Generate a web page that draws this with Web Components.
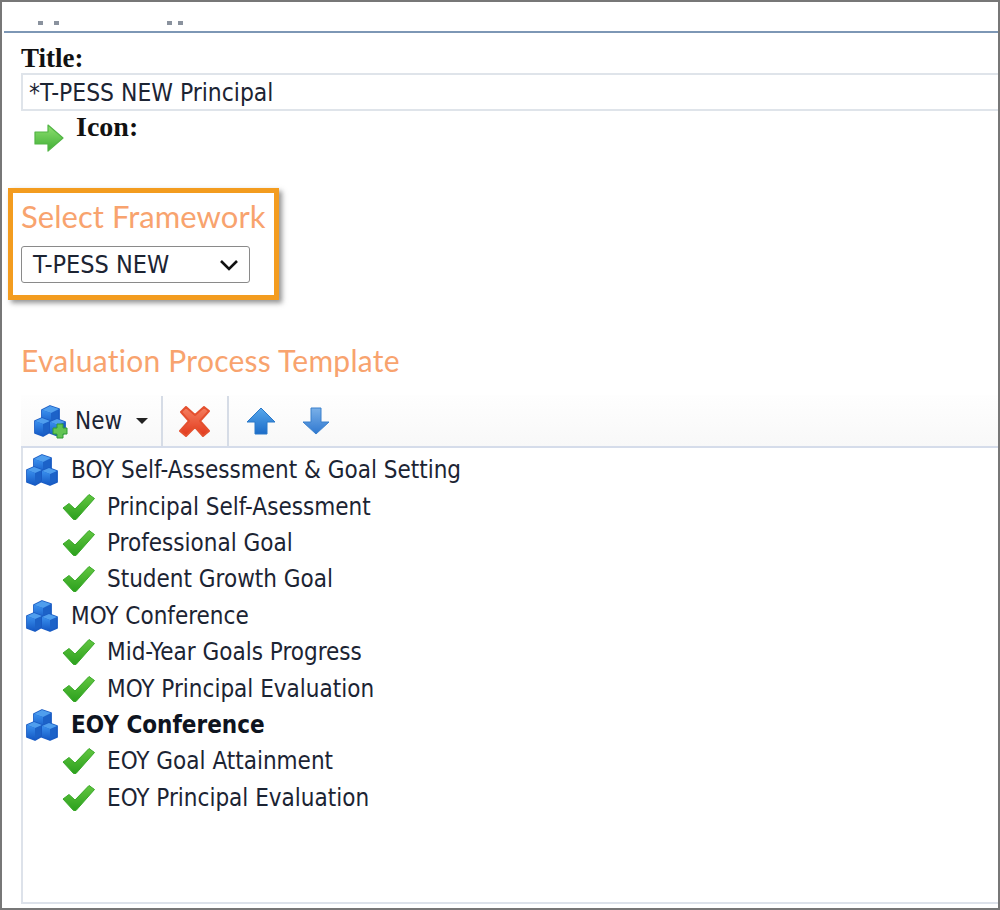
<!DOCTYPE html>
<html>
<head>
<meta charset="utf-8">
<title>Evaluation Process Template</title>
<style>
html, body { margin: 0; padding: 0; background: #fff; }
body { font-family: "DejaVu Sans", sans-serif; overflow: hidden; }
</style>
</head>
<body>
<app-frame>
  <title-field label="Title:" value="*T-PESS NEW Principal"></title-field>
  <icon-field label="Icon:"></icon-field>
  <framework-box heading="Select Framework" value="T-PESS NEW"></framework-box>
  <section-heading>Evaluation Process Template</section-heading>
  <process-toolbar></process-toolbar>
  <process-tree>
    <tree-row kind="group">BOY Self-Assessment &amp; Goal Setting</tree-row>
    <tree-row>Principal Self-Asessment</tree-row>
    <tree-row>Professional Goal</tree-row>
    <tree-row>Student Growth Goal</tree-row>
    <tree-row kind="group">MOY Conference</tree-row>
    <tree-row>Mid-Year Goals Progress</tree-row>
    <tree-row>MOY Principal Evaluation</tree-row>
    <tree-row kind="group" selected>EOY Conference</tree-row>
    <tree-row>EOY Goal Attainment</tree-row>
    <tree-row>EOY Principal Evaluation</tree-row>
  </process-tree>
</app-frame>

<script>
// shared icons - gradients have to live in the same shadow root as the svg
const UI_FONT = `"DejaVu Sans Condensed", "DejaVu Sans", sans-serif`;

const CUBES = `
<svg viewBox="0 0 32 32" width="32" height="32" style="filter:blur(.6px)">
  <defs>
    <linearGradient id="cubeSide" x1="0" y1="0" x2="0" y2="1"><stop offset="0" stop-color="#3a90ee"/><stop offset="1" stop-color="#1458c4"/></linearGradient>
  </defs>
  <g stroke="#1a5cc4" stroke-width="1.800" stroke-linejoin="round">
    <path d="M8 5l8-4 9 3v12l-8 4-9-3z" fill="#1c62c8"/>
    <path d="M8 5l8-4 9 3-8 4z" fill="#4f9eee" stroke="none"/>
    <path d="M8 5l9 3v12l-9-3z" fill="url(#cubeSide)" stroke="none"/>
    <path d="M1 16l7-3 8 3v11l-7 4-8-3z" fill="#1c62c8"/>
    <path d="M1 16l7-3 8 3-7 3z" fill="#4f9eee" stroke="none"/>
    <path d="M1 16l8 3v12l-8-3z" fill="url(#cubeSide)" stroke="none"/>
    <path d="M16 17l7-3 8 3v11l-7 3-8-3z" fill="#1c62c8"/>
    <path d="M16 17l7-3 8 3-7 3z" fill="#4f9eee" stroke="none"/>
    <path d="M16 17l8 3v11l-8-3z" fill="url(#cubeSide)" stroke="none"/>
  </g>
</svg>`;
const CHECK = `
<svg viewBox="0 0 33 28" width="33" height="28" style="filter:blur(.5px)">
  <defs>
    <linearGradient id="chk" x1="0" y1="0" x2="0" y2="1"><stop offset="0" stop-color="#62c640"/><stop offset="1" stop-color="#2ca01e"/></linearGradient>
  </defs>
  <path d="M1 15l6-4.500 6 5.500L27 1.500l5.500 4L14 26.500h-2.500z" fill="url(#chk)" stroke="#38a828" stroke-width="1" stroke-linejoin="round"/>
</svg>`;

class AppFrame extends HTMLElement {
  constructor() {
    super();
    this.attachShadow({ mode: "open" }).innerHTML = `
    <style>
      :host { display: block; box-sizing: border-box; width: 1000px; height: 910px; border: 2px solid #777; overflow: hidden; background: #fff; color: #1c2433; }
      .top { height: 29px; margin-left: 2px; border-bottom: 2px solid #7d97b5; display: flex; align-items: flex-end; padding-left: 34px; }
      .dots { display: flex; gap: 11px; margin-bottom: 6px; }
      .dots + .dots { margin-left: 108px; gap: 6px; }
      .dots i { width: 5px; height: 4px; background: #8a929e; display: block; }
    </style>
    <div class="top">
      <div class="dots"><i></i><i></i></div>
      <div class="dots"><i></i><i></i></div>
    </div>
    <slot></slot>`;
  }
}
customElements.define("app-frame", AppFrame);

class TitleField extends HTMLElement {
  constructor() {
    super();
    this.attachShadow({ mode: "open" }).innerHTML = `
    <style>
      :host { display: block; padding: 10px 0 0 19px; }
      .lab { font: bold 27px/30px "Liberation Serif", serif; color: #111; height: 30px; }
      .inp { box-sizing: border-box; height: 38px; margin-right: -4px; border: 2px solid #dfe4ea; border-right: 0; padding-left: 6px; font: 24.400px/36px ${UI_FONT}; color: #1c2433; white-space: nowrap; }
    </style>
    <div class="lab"></div>
    <div class="inp"></div>`;
  }
  connectedCallback() {
    this.shadowRoot.querySelector(".lab").textContent = this.getAttribute("label");
    this.shadowRoot.querySelector(".inp").textContent = this.getAttribute("value");
  }
}
customElements.define("title-field", TitleField);

class IconField extends HTMLElement {
  constructor() {
    super();
    this.attachShadow({ mode: "open" }).innerHTML = `
    <style>
      :host { display: flex; padding: 2px 0 0 32px; height: 77px; box-sizing: border-box; }
      svg { margin-top: 11px; flex: none; filter: blur(.6px); }
      .lab { font: bold 28px/28px "Liberation Serif", serif; color: #111; margin-left: 12px; }
    </style>
    <svg viewBox="0 0 30 28" width="30" height="28">
      <defs><linearGradient id="arw" x1="0" y1="0" x2="0" y2="1"><stop offset="0" stop-color="#8fe070"/><stop offset="1" stop-color="#3fae35"/></linearGradient></defs>
      <path d="M1 8h13V1l15 13-15 13v-7H1z" fill="url(#arw)" stroke="#52b545" stroke-width="1.200" stroke-linejoin="round"/>
    </svg>
    <div class="lab"></div>`;
  }
  connectedCallback() {
    this.shadowRoot.querySelector(".lab").textContent = this.getAttribute("label");
  }
}
customElements.define("icon-field", IconField);

class FrameworkBox extends HTMLElement {
  constructor() {
    super();
    this.attachShadow({ mode: "open" }).innerHTML = `
    <style>
      :host { display: block; box-sizing: border-box; width: 271px; height: 112px; margin: 0 0 0 6px; border: 5px solid #f39c1f; box-shadow: 3px 3px 5px rgba(60,60,60,.55); padding: 3px 0 0 8px; }
      h2 { margin: 0; font: 400 31px/40px Lato, sans-serif; color: #f8a36e; white-space: nowrap; letter-spacing: .05px; }
      .sel { box-sizing: border-box; width: 229px; height: 37px; margin-top: 10px; border: 1px solid #8a8a8a; border-radius: 3px; display: flex; align-items: center; justify-content: space-between; padding: 0 10px 0 11px; font: 25px/34px ${UI_FONT}; color: #1c2433; }
      svg { flex: none; }
    </style>
    <h2></h2>
    <div class="sel"><span></span>
      <svg viewBox="0 0 20 14" width="20" height="14"><path d="M2 3l8 8 8-8" fill="none" stroke="#111" stroke-width="2.600"/></svg>
    </div>`;
  }
  connectedCallback() {
    this.shadowRoot.querySelector("h2").textContent = this.getAttribute("heading");
    this.shadowRoot.querySelector(".sel span").textContent = this.getAttribute("value");
  }
}
customElements.define("framework-box", FrameworkBox);

class SectionHeading extends HTMLElement {
  constructor() {
    super();
    this.attachShadow({ mode: "open" }).innerHTML = `
    <style>
      :host { display: block; margin: 38px 0 0 19px; height: 57px; font: 400 30px/44px Lato, sans-serif; color: #f8a36e; white-space: nowrap; letter-spacing: .25px; }
    </style>
    <slot></slot>`;
  }
}
customElements.define("section-heading", SectionHeading);

class ProcessToolbar extends HTMLElement {
  constructor() {
    super();
    this.attachShadow({ mode: "open" }).innerHTML = `
    <style>
      :host { display: flex; align-items: center; box-sizing: border-box; height: 53px; margin-left: 19px; margin-right: -2px; padding-left: 13px; background: linear-gradient(#fefefe,#f8f8f8); border-bottom: 2px solid #d5dcea; font: 24px/30px ${UI_FONT}; color: #1c2433; }
      .new { display: flex; align-items: center; }
      .label { margin-left: 9px; }
      .caret { width: 0; height: 0; border: 6px solid transparent; border-top: 6px solid #222; border-bottom: 0; margin-left: 14px; }
      .sep { width: 2px; height: 50px; background: #d6dce6; }
      svg { flex: none; display: block; }
    </style>
    <div class="new">
      <span style="position:relative;display:block;width:32px;height:32px">${CUBES}
        <svg viewBox="0 0 16 16" width="16" height="16" style="position:absolute;right:-2px;bottom:-2px"><path d="M5 1h6v4h4v6h-4v4H5v-4H1V5h4z" fill="#62c454" stroke="#2f9b34"/></svg>
      </span>
      <span class="label">New</span>
      <span class="caret"></span>
    </div>
    <span class="sep" style="margin-left:13px"></span>
    <svg style="margin-left:15px;filter:blur(.5px)" viewBox="0 0 34 34" width="34" height="34">
      <defs><linearGradient id="red" x1="0" y1="0" x2="0" y2="1"><stop offset="0" stop-color="#f58060"/><stop offset="1" stop-color="#e2381c"/></linearGradient></defs>
      <path d="M3 8l5-5 9 8 9-8 5 4-9 10 9 10-6 5-8-9-9 9-6-5 9-10z" fill="url(#red)" stroke="#e4502f" stroke-width="2" stroke-linejoin="round"/>
    </svg>
    <span class="sep" style="margin-left:15px"></span>
    <svg style="margin-left:17px;filter:blur(.5px)" viewBox="0 0 30 28" width="30" height="28">
      <defs><linearGradient id="blu" x1="0" y1="0" x2="0" y2="1"><stop offset="0" stop-color="#58a8ec"/><stop offset="1" stop-color="#1c6cc8"/></linearGradient></defs>
      <path d="M15 1l14 14h-8v12H9V15H1z" fill="url(#blu)" stroke="#2a78c8" stroke-linejoin="round"/>
    </svg>
    <svg style="margin-left:26px;filter:blur(.5px)" viewBox="0 0 28 28" width="28" height="28">
      <defs><linearGradient id="blu2" x1="0" y1="0" x2="0" y2="1"><stop offset="0" stop-color="#7ab0e8"/><stop offset="1" stop-color="#2f78d0"/></linearGradient></defs>
      <path d="M9 1h10v14h8L14 27 1 15h8z" fill="url(#blu2)" stroke="#3a80cc" stroke-linejoin="round"/>
    </svg>`;
  }
}
customElements.define("process-toolbar", ProcessToolbar);

class ProcessTree extends HTMLElement {
  constructor() {
    super();
    this.attachShadow({ mode: "open" }).innerHTML = `
    <style>
      :host { display: block; box-sizing: border-box; height: 456px; margin-left: 19px; margin-right: -2px; padding-top: 4px; border-left: 2px solid #dde2ea; border-bottom: 2px solid #dde2ea; }
    </style>
    <slot></slot>`;
  }
}
customElements.define("process-tree", ProcessTree);

class TreeRow extends HTMLElement {
  constructor() {
    super();
    this.attachShadow({ mode: "open" }).innerHTML = `
    <style>
      :host { display: flex; align-items: center; height: 36.400px; font: 24px/30px ${UI_FONT}; color: #1c2433; white-space: nowrap; padding-left: 39px; }
      :host([kind="group"]) { padding-left: 3px; }
      :host([selected]) { font-weight: 700; color: #0e1420; }
      .ic { display: block; flex: none; width: 33px; height: 28px; margin-right: 12px; }
      :host([kind="group"]) .ic { width: 32px; height: 32px; margin-right: 13px; }
      svg { display: block; }
    </style>
    <span class="ic"></span><slot></slot>`;
  }
  connectedCallback() {
    this.shadowRoot.querySelector(".ic").innerHTML = this.getAttribute("kind") === "group" ? CUBES : CHECK;
  }
}
customElements.define("tree-row", TreeRow);
</script>
</body>
</html>
